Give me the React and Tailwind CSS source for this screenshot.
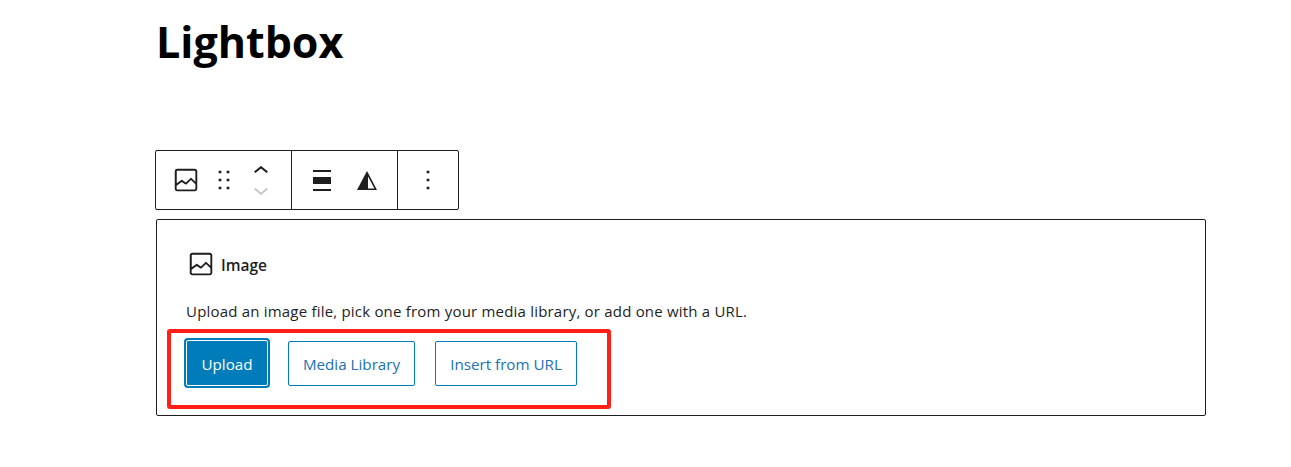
import React from 'react';

const font = "font-['Open_Sans','Noto_Sans',sans-serif]";

const ImageIcon = () => (
    <svg viewBox="0 0 24 24" className="w-[30px] h-[30px] shrink-0" fill="#1e1e1e">
        <path d="M19 3H5c-1.1 0-2 .9-2 2v14c0 1.1.9 2 2 2h14c1.1 0 2-.9 2-2V5c0-1.1-.9-2-2-2zM5 4.5h14c.3 0 .5.2.5.5v8.4l-3-2.9c-.3-.3-.8-.3-1 0L11.9 14 9 12c-.3-.2-.6-.2-.8 0l-3.6 2.6V5c-.1-.3.1-.5.4-.5zm14 15H5c-.3 0-.5-.2-.5-.5v-2.4l4.1-3 3 1.9c.3.2.7.2.9-.1L16 12l3.5 3.4V19c0 .3-.2.5-.5.5z" />
    </svg>
);

const DragIcon = () => (
    <svg viewBox="0 0 24 24" className="w-8 h-8 shrink-0" fill="#1e1e1e">
        <path d="M8 7h2V5H8v2zm0 6h2v-2H8v2zm0 6h2v-2H8v2zm6-14v2h2V5h-2zm0 8h2v-2h-2v2zm0 6h2v-2h-2v2z" />
    </svg>
);

const Chevrons = () => (
    <div className="flex flex-col items-center gap-[15px] w-[14px] ml-[7px]">
        <svg viewBox="0 0 14 7" className="w-[14px] h-[7px]" fill="none" stroke="#1e1e1e" strokeWidth="2">
            <path d="M.7 6.3 7 1.2l6.3 5.1" />
        </svg>
        <svg viewBox="0 0 14 7" className="w-[14px] h-[7px]" fill="none" stroke="#c8c8c8" strokeWidth="2">
            <path d="M.7.7 7 5.8 13.3.7" />
        </svg>
    </div>
);

const AlignIcon = () => (
    <svg viewBox="0 0 18 21" className="w-[18px] h-[21px]" fill="#1e1e1e">
        <path d="M0 0h18v2H0zM0 7h18v7H0zM0 19h18v2H0z" />
    </svg>
);

const ContrastIcon = () => (
    <svg viewBox="0 0 20 19" className="w-5 h-[19px] ml-[26px]" fill="#1e1e1e">
        <path d="M10 0 0 19h10z" />
        <path fillRule="evenodd" d="M10 0l10 19H10zm1 5.6V17.5h6.4z" />
    </svg>
);

const DotsIcon = () => (
    <svg viewBox="0 0 24 24" className="w-8 h-8" fill="#1e1e1e">
        <path d="M13 19h-2v-2h2v2zm0-6h-2v-2h2v2zm0-6h-2V5h2v2z" />
    </svg>
);

const App = () => {
    return (
        <div className={`relative w-[1291px] h-[467px] overflow-hidden bg-white pl-[155px] ${font}`}>
            <h1 className="h-[150px] pt-[16px] pl-[1px] text-[43px] leading-[52px] font-bold text-black">Lightbox</h1>

            <div className="flex w-[304px] h-[60px] border border-[#1e1e1e] rounded-[2px]">
                <div className="flex items-center w-[136px] pl-[15px] gap-[7px] border-r border-[#1e1e1e]">
                    <ImageIcon />
                    <DragIcon />
                    <Chevrons />
                </div>
                <div className="flex items-center w-[106px] pl-[21px] border-r border-[#1e1e1e]">
                    <AlignIcon />
                    <ContrastIcon />
                </div>
                <div className="flex flex-1 items-center justify-center">
                    <DotsIcon />
                </div>
            </div>

            <div className="mt-[9px] ml-[1px] w-[1050px] h-[197px] border border-[#1e1e1e] rounded-[2px] pl-[29px] pt-[29px]">
                <div className="flex items-center h-[30px] gap-[5px]">
                    <ImageIcon />
                    <span className="pt-[3px] text-[15.5px] font-semibold text-[#1e1e1e]">Image</span>
                </div>
                <p className="mt-[21px] text-[15px] tracking-[0.2px] leading-[22px] text-[#1e1e1e]">
                    Upload an image file, pick one from your media library, or add one with a URL.
                </p>
                <div className="flex items-start mt-[18px] text-[15.2px]">
                    <button className="w-[82px] h-[46px] pt-[3px] rounded-[2px] bg-[#007cba] text-white ring-2 ring-[#007cba] border border-white">
                        Upload
                    </button>
                    <button className="w-[127px] h-[45px] mt-[1px] ml-[20px] pt-[2px] rounded-[2px] border border-[#007cba] text-[#2271b1]">
                        Media Library
                    </button>
                    <button className="w-[142px] h-[45px] mt-[1px] ml-[20px] pt-[2px] rounded-[2px] border border-[#007cba] text-[#2271b1]">
                        Insert from URL
                    </button>
                </div>
            </div>

            <div className="absolute left-[167px] top-[329px] w-[444px] h-[80px] border-4 border-[#ff1f17] rounded-[3px]" />
        </div>
    );
};

export default App;
